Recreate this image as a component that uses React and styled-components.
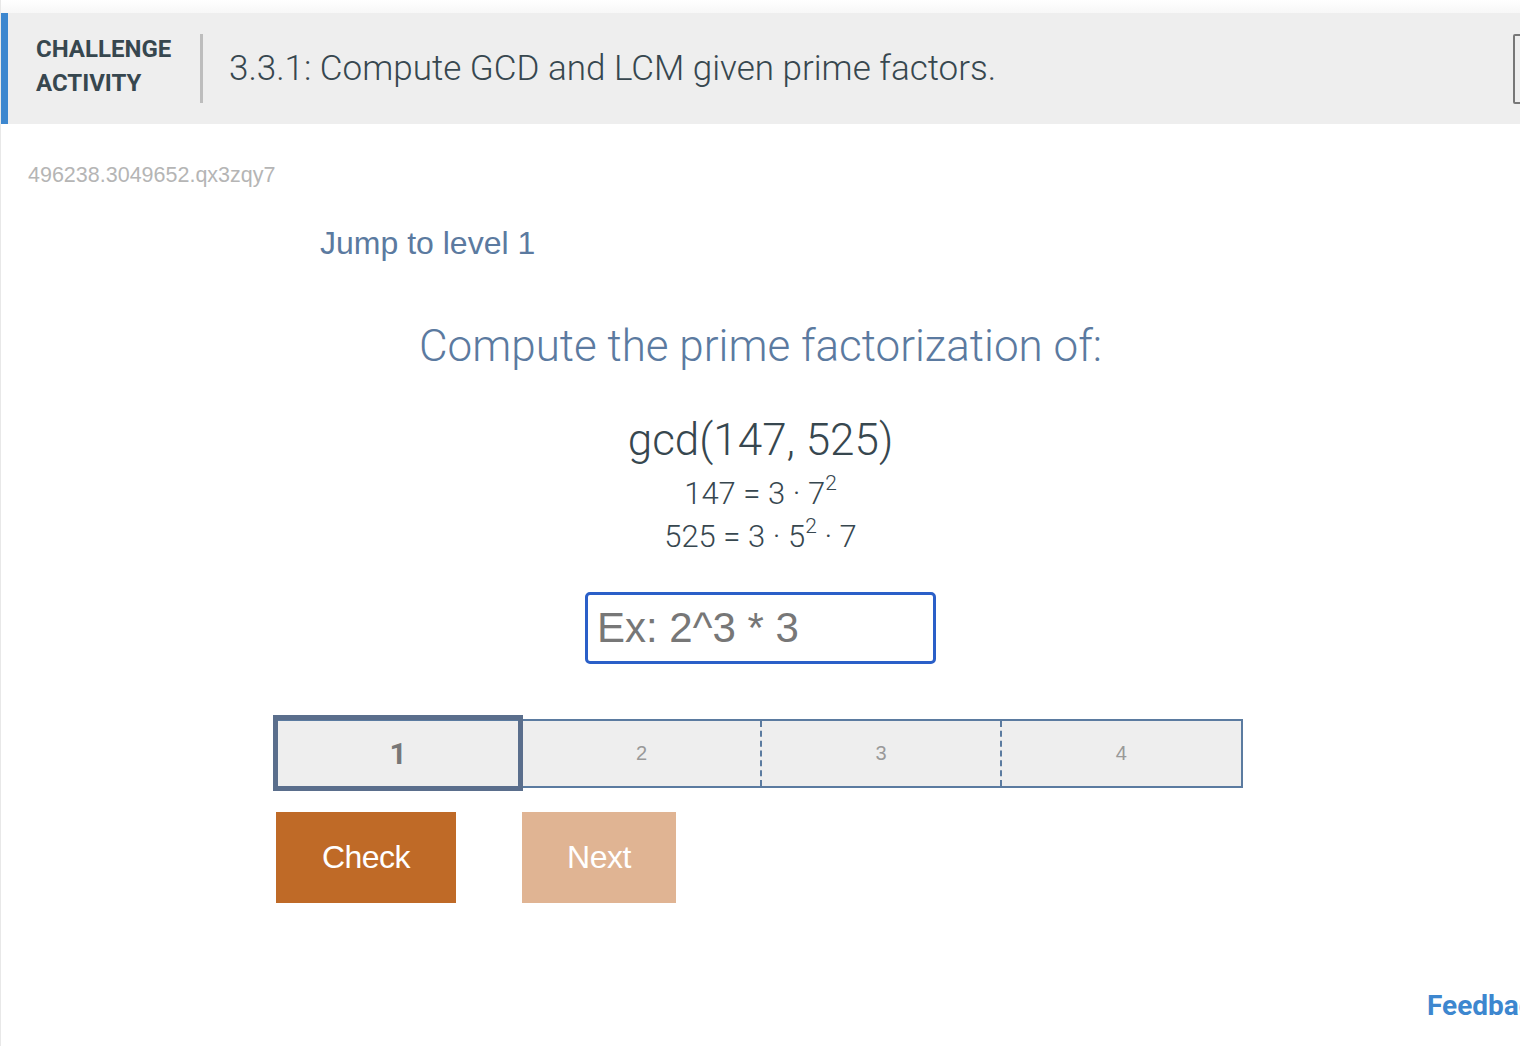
import * as React from 'react'
import styled, { createGlobalStyle } from 'styled-components'

const GlobalStyle = createGlobalStyle`
  html, body {
    margin: 0;
    padding: 0;
    background: #fff;
    overflow: hidden;
  }
  body {
    font-family: Roboto, 'Liberation Sans', sans-serif;
  }
`

const levels = [1, 2, 3, 4]

export default function App() {
  return (
    <>
      <GlobalStyle />
      <Page>
        <TopStrip />
        <Header>
          <Label>
            CHALLENGE
            <br />
            ACTIVITY
          </Label>
          <Divider />
          <Title>3.3.1: Compute GCD and LCM given prime factors.</Title>
          <CornerBox />
        </Header>
        <Content>
          <ActivityId>496238.3049652.qx3zqy7</ActivityId>
          <JumpLink>Jump to level 1</JumpLink>
          <Prompt>Compute the prime factorization of:</Prompt>
          <Expression>gcd(147, 525)</Expression>
          <Factors>
            <Factor>
              147 = 3 · 7<sup>2</sup>
            </Factor>
            <Factor>
              525 = 3 · 5<sup>2</sup> · 7
            </Factor>
          </Factors>
          <AnswerInput placeholder="Ex: 2^3 * 3" />
          <LevelBar>
            {levels.map((n) => (
              <Level key={n} active={n === 1} dashed={n > 1 && n < 4}>
                {n}
              </Level>
            ))}
          </LevelBar>
          <Buttons>
            <Button>Check</Button>
            <Button faded>Next</Button>
          </Buttons>
        </Content>
        <Feedback>Feedback?</Feedback>
      </Page>
    </>
  )
}

const Page = styled.div`
  position: relative;
  width: 1520px;
  height: 1046px;
  border-left: 1px solid #e8e8e8;
  box-sizing: border-box;
  overflow: hidden;
`

const TopStrip = styled.div`
  height: 13px;
  background: linear-gradient(#fff, #f7f7f7);
`

const Header = styled.div`
  display: flex;
  align-items: center;
  height: 111px;
  margin-left: -1px;
  background: #eeeeee;
  border-left: 8px solid #3d87cf;
  box-sizing: border-box;
  padding-left: 28px;
`

const Label = styled.div`
  font-family: Roboto, sans-serif;
  font-weight: 700;
  font-size: 24px;
  line-height: 34px;
  color: #37474f;
  width: 164px;
  margin-top: -6px;
`

const Divider = styled.div`
  width: 3px;
  height: 69px;
  background: #bdbdbd;
`

const Title = styled.div`
  flex: 1;
  margin-left: 26px;
  font-family: Roboto, sans-serif;
  font-weight: 300;
  font-size: 35px;
  color: #37474f;
  white-space: nowrap;
`

const CornerBox = styled.div`
  width: 40px;
  height: 70px;
  margin-right: -33px;
  border: 2px solid #777;
  border-radius: 2px;
  box-sizing: border-box;
`

const Content = styled.div`
  display: flex;
  flex-direction: column;
  align-items: center;
  padding: 39px 27px 0;
`

const ActivityId = styled.div`
  align-self: flex-start;
  font-family: 'Liberation Sans', Arial, sans-serif;
  font-size: 21.5px;
  line-height: 24px;
  color: #b5b5b5;
`

const JumpLink = styled.a`
  align-self: flex-start;
  margin: 37px 0 0 292px;
  font-family: 'Liberation Sans', Arial, sans-serif;
  font-size: 32px;
  line-height: 38px;
  color: #5b7aa0;
`

const Prompt = styled.div`
  margin-top: 58px;
  font-family: Roboto, sans-serif;
  font-weight: 300;
  font-size: 44px;
  line-height: 52px;
  color: #5b7aa0;
`

const Expression = styled.div`
  margin-top: 42px;
  font-family: Roboto, sans-serif;
  font-weight: 300;
  font-size: 44px;
  line-height: 52px;
  color: #37474f;
`

const Factors = styled.div`
  display: flex;
  flex-direction: column;
  align-items: center;
  margin-top: 6px;
`

const Factor = styled.div`
  font-family: Roboto, sans-serif;
  font-weight: 300;
  font-size: 31px;
  line-height: 43px;
  color: #37474f;

  sup {
    font-size: 21px;
    line-height: 0;
    vertical-align: 14px;
  }
`

const AnswerInput = styled.input`
  margin-top: 34px;
  width: 351px;
  height: 72px;
  box-sizing: border-box;
  border: 3px solid #2a5fc8;
  border-radius: 5px;
  padding: 0 9px;
  font-family: 'Liberation Sans', Arial, sans-serif;
  font-size: 42px;
  color: #333;
  outline: none;

  &::placeholder {
    color: #777;
  }
`

const LevelBar = styled.div`
  display: grid;
  grid-template-columns: 248px repeat(3, 1fr);
  align-self: flex-start;
  width: 970px;
  height: 69px;
  margin: 55px 0 0 245px;
  border: 2px solid #5b7ba0;
  box-sizing: border-box;
  background: #eeeeee;
`

const Level = styled.div`
  display: flex;
  align-items: center;
  justify-content: center;
  font-family: ${(p) => (p.active ? 'Roboto' : "'Liberation Sans'")}, sans-serif;
  font-size: ${(p) => (p.active ? '30px' : '20px')};
  font-weight: ${(p) => (p.active ? 700 : 400)};
  color: ${(p) => (p.active ? '#777' : '#999')};
  border-right: ${(p) => (p.dashed ? '2px dashed #5b7ba0' : 'none')};
  ${(p) =>
    p.active &&
    `
    margin: -6px 0 -5px -2px;
    border: 5px solid #5a6e8c;
  `}
`

const Buttons = styled.div`
  display: flex;
  gap: 66px;
  align-self: flex-start;
  margin: 24px 0 0 248px;
`

const Button = styled.button`
  height: 91px;
  padding: 0 44px;
  min-width: ${(p) => (p.faded ? '154px' : '180px')};
  border: none;
  background: ${(p) => (p.faded ? '#e0b493' : '#bf6a27')};
  color: #fff;
  font-family: 'Liberation Sans', Arial, sans-serif;
  font-size: 32px;
  letter-spacing: -0.5px;
  cursor: pointer;
`

const Feedback = styled.div`
  position: absolute;
  left: 1426px;
  top: 989px;
  font-family: Roboto, sans-serif;
  font-weight: 700;
  font-size: 28px;
  color: #3d87cf;
  white-space: nowrap;
`
